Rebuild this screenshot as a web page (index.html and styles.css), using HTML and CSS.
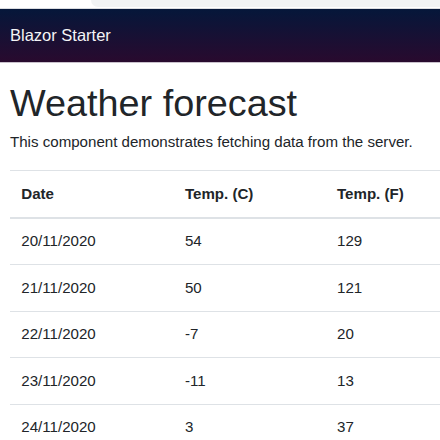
FILE: index.html
```html
<!DOCTYPE html>
<html lang="en">
<head>
<meta charset="utf-8">
<title>Blazor Starter</title>
<link rel="stylesheet" href="styles.css">
</head>
<body>
<div class="chrome">
  <div class="chrome-gap"></div>
  <div class="chrome-tab"></div>
</div>
<header class="top-row">
  <span class="brand">Blazor Starter</span>
</header>
<main class="content">
  <h1 class="title">Weather forecast</h1>
  <p class="lead">This component demonstrates fetching data from the server.</p>
  <table class="table">
    <thead>
      <tr><th class="c-date">Date</th><th class="c-c">Temp. (C)</th><th>Temp. (F)</th></tr>
    </thead>
    <tbody>
      <tr><td>20/11/2020</td><td>54</td><td>129</td></tr>
      <tr><td>21/11/2020</td><td>50</td><td>121</td></tr>
      <tr><td>22/11/2020</td><td>-7</td><td>20</td></tr>
      <tr><td>23/11/2020</td><td>-11</td><td>13</td></tr>
      <tr><td>24/11/2020</td><td>3</td><td>37</td></tr>
    </tbody>
  </table>
</main>
</body>
</html>
```
FILE: styles.css
```css
html, body {
  margin: 0;
  padding: 0;
  background: #ffffff;
  overflow: hidden;
}
body {
  font-family: "Liberation Sans", Arial, sans-serif;
  font-size: 15.1px;
  line-height: 1.5;
  color: #212529;
}
.chrome {
  display: flex;
  height: 8px;
  background: #ffffff;
  border-bottom: 1px solid #dadce0;
}
.chrome-gap {
  width: 91px;
  flex: none;
}
.chrome-tab {
  flex: 1;
  height: 7px;
  background: #f1f3f4;
  border-bottom-left-radius: 9px;
}
.top-row {
  height: 53px;
  display: flex;
  align-items: center;
  padding: 0 10px;
  background: linear-gradient(180deg, #05173a 0%, #290a2e 100%);
  border-bottom: 1px solid #c9c1cc;
}
.brand {
  color: #f4f4f6;
  font-size: 16.5px;
}
.content {
  padding: 18px 0 0 10px;
}
.title {
  margin: 0 0 4.4px;
  font-size: 37.8px;
  font-weight: 400;
  line-height: 1.2;
}
.lead {
  margin: 0 0 16.8px;
}
.table {
  width: 100%;
  border-collapse: collapse;
}
.table th, .table td {
  text-align: left;
  padding: 11.45px 11.3px;
  border-top: 1px solid #dee2e6;
  vertical-align: top;
}
.table th {
  font-weight: 700;
  border-bottom: 2px solid #dee2e6;
}
.c-date { width: 141px; }
.c-c { width: 129.5px; }
```
